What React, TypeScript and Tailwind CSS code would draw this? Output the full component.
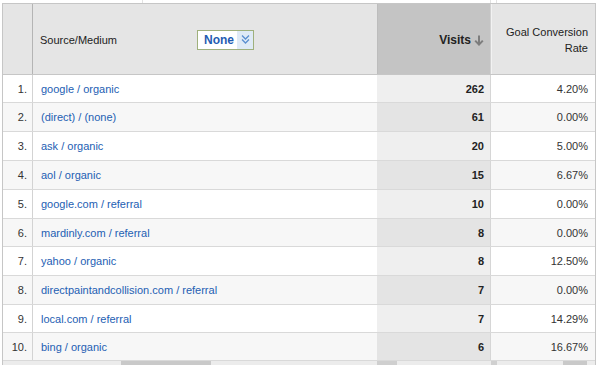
import React from "react";

const rows: [string, string, string][] = [
  ["google / organic", "262", "4.20%"],
  ["(direct) / (none)", "61", "0.00%"],
  ["ask / organic", "20", "5.00%"],
  ["aol / organic", "15", "6.67%"],
  ["google.com / referral", "10", "0.00%"],
  ["mardinly.com / referral", "8", "0.00%"],
  ["yahoo / organic", "8", "12.50%"],
  ["directpaintandcollision.com / referral", "7", "0.00%"],
  ["local.com / referral", "7", "14.29%"],
  ["bing / organic", "6", "16.67%"],
];

const heights = [
  "h-[28px]",
  "h-[29px]",
  "h-[29px]",
  "h-[29px]",
  "h-[29px]",
  "h-[28px]",
  "h-[29px]",
  "h-[29px]",
  "h-[28px]",
  "h-[28px]",
];

function DownArrow() {
  return (
    <svg width="10" height="11" viewBox="0 0 10 11" className="ml-[3px]">
      <path d="M5 0.5 V9" stroke="#7d7d7d" strokeWidth="2" fill="none" />
      <path d="M1.2 5.6 L5 9.6 L8.8 5.6" stroke="#7d7d7d" strokeWidth="2" fill="none" />
    </svg>
  );
}

function DoubleChevron() {
  return (
    <svg width="9" height="11" viewBox="0 0 9 11">
      <path d="M1 1.5 L4.5 5 L8 1.5" stroke="#5a8fd0" strokeWidth="1.3" fill="none" />
      <path d="M1 5.5 L4.5 9 L8 5.5" stroke="#5a8fd0" strokeWidth="1.3" fill="none" />
    </svg>
  );
}

export default function App() {
  return (
    <div
      className="w-[598px] h-[365px] bg-white overflow-hidden text-[11px]"
      style={{ fontFamily: '"Liberation Sans", Arial, sans-serif' }}
    >
      {/* top strip */}
      <div className="flex h-[3px]">
        <div className="w-[142px]" />
        <div className="w-[348px] border-l border-[#e2e2e2]" />
        <div className="w-[6px] border-l border-[#e2e2e2]" />
        <div className="flex-1 border-l border-[#e2e2e2]" />
      </div>
      <div className="ml-[2px] w-[594px] border-l border-t border-r border-[#c6c6c6]">
        {/* header */}
        <div className="flex h-[71px] bg-[#e5e5e5] border-b border-[#c6c6c6] text-[#222]">
          <div className="w-[30px] border-r border-[#b4b4b4]" />
          <div className="w-[344px] flex items-center pl-[7px] pt-[2px]">
            <span className="w-[157px]">Source/Medium</span>
            <div className="flex h-[20px] w-[57px] border border-[#9fb07c] bg-white -mt-[1px]">
              <span className="flex items-center pl-[6px] w-[39px] font-bold text-[#1f5cb2] text-[12px]">
                None
              </span>
              <span className="flex flex-1 items-center justify-center bg-[#dfeaf6]">
                <DoubleChevron />
              </span>
            </div>
          </div>
          <div className="w-[114px] flex items-center justify-end pr-[6px] pt-[2px] bg-[#c4c4c4] border-l border-[#bdbdbd] border-r border-r-[#d2d2d2] font-bold text-[12px] text-[#222]">
            Visits
            <DownArrow />
          </div>
          <div className="flex-1 flex items-center justify-end pr-[7px] pt-[2px] text-right leading-[16px] border-l border-[#f2f2f2]">
            <span>
              Goal Conversion
              <br />
              Rate
            </span>
          </div>
        </div>
        {/* rows */}
        {rows.map(([src, visits, rate], i) => {
          const even = i % 2 === 1;
          return (
            <div
              key={i}
              className={`flex ${heights[i]} border-b border-[#d9d9d9] ${even ? "bg-[#f7f7f7]" : "bg-white"}`}
            >
              <div className="w-[30px] flex items-center justify-end pr-[5px] pt-[1px] border-r border-[#d3d3d3] text-[#333]">
                {i + 1}.
              </div>
              <div className="w-[344px] flex items-center pl-[8px] pt-[1px] text-[#2460b3]">{src}</div>
              <div
                className={`w-[114px] flex items-center justify-end pr-[6px] pt-[1px] font-bold text-[#222] border-r border-[#d6d6d6] ${
                  even ? "bg-[#e4e4e4]" : "bg-[#efefef]"
                }`}
              >
                {visits}
              </div>
              <div className="flex-1 flex items-center justify-end pr-[7px] pt-[1px] text-[#333]">{rate}</div>
            </div>
          );
        })}
        {/* bottom strip */}
        <div className="flex h-[4px] bg-[#ececec]">
          <div className="w-[118px]" />
          <div className="w-[90px] bg-[#c9c9c9]" />
          <div className="w-[166px]" />
          <div className="w-[20px] bg-[#cfcfcf]" />
          <div className="w-[94px]" />
          <div className="w-[6px] bg-[#d0d0d0]" />
          <div className="w-[66px]" />
          <div className="w-[24px] bg-[#c9c9c9]" />
        </div>
      </div>
    </div>
  );
}
